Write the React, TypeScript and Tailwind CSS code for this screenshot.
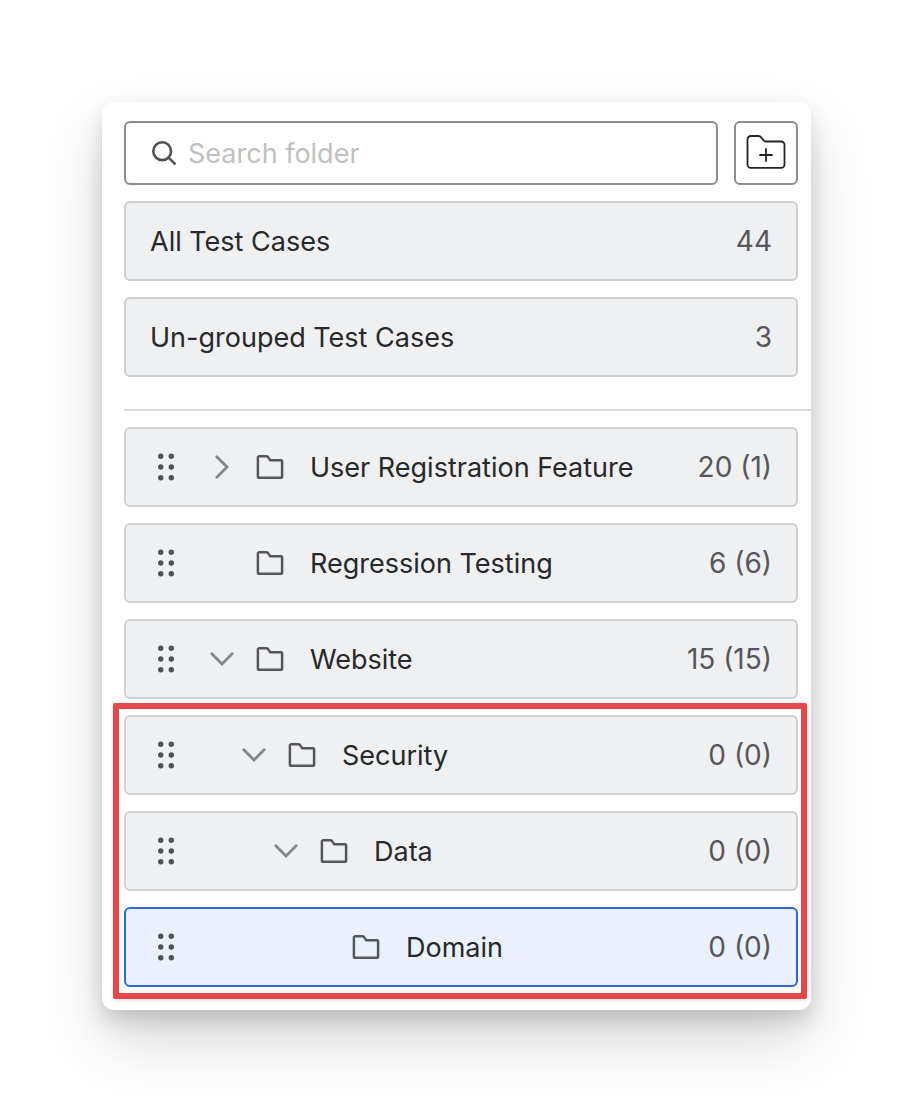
import clsx from "clsx";

type Folder = {
  name: string;
  count: string;
  level: 0 | 1 | 2 | 3;
  state?: "open" | "closed";
  selected?: boolean;
};

const summary = [
  { name: "All Test Cases", count: "44" },
  { name: "Un-grouped Test Cases", count: "3" },
];

const folders: Folder[] = [
  { name: "User Registration Feature", count: "20 (1)", level: 0, state: "closed" },
  { name: "Regression Testing", count: "6 (6)", level: 0 },
  { name: "Website", count: "15 (15)", level: 0, state: "open" },
];

const nestedFolders: Folder[] = [
  { name: "Security", count: "0 (0)", level: 1, state: "open" },
  { name: "Data", count: "0 (0)", level: 2, state: "open" },
  { name: "Domain", count: "0 (0)", level: 3, selected: true },
];

const indent = {
  0: "ml-6",
  1: "ml-14",
  2: "ml-22",
  3: "ml-30",
};

const SearchIcon = () => (
  <svg viewBox="0 0 24 24" className="size-6 shrink-0 text-[#505157]" fill="none" stroke="currentColor" strokeWidth="2.6" strokeLinecap="round">
    <circle cx="10.2" cy="10.2" r="8.9" />
    <path d="M16.8 16.8 22.7 22.7" />
  </svg>
);

const FolderPlusIcon = () => (
  <svg viewBox="0 0 40 40" className="size-10 text-[#232427]" fill="none" stroke="currentColor" strokeWidth="1.8" strokeLinecap="round" strokeLinejoin="round">
    <path d="M1.5 6.4a3.4 3.4 0 0 1 3.4-3.4h7.4c1.3 0 2.3.5 3 1.5l2 2.6c.6.9 1.4 1.4 2.6 1.4h15.2a3.4 3.4 0 0 1 3.4 3.4v19.6a3.4 3.4 0 0 1-3.4 3.4H4.9a3.4 3.4 0 0 1-3.4-3.4Z" />
    <path d="M20 16v12M14 22h12" />
  </svg>
);

const FolderIcon = () => (
  <svg viewBox="0 0 32 32" className="size-8 shrink-0 text-[#55565c]" fill="none" stroke="currentColor" strokeWidth="2.5" strokeLinejoin="round">
    <path d="M3.9 6.5A1.3 1.3 0 0 1 5.2 5.2h7.4c.4 0 .8.2 1.1.5l2.6 3.5h10.5a1.3 1.3 0 0 1 1.3 1.3v15a1.3 1.3 0 0 1-1.3 1.3H5.2a1.3 1.3 0 0 1-1.3-1.3Z" />
  </svg>
);

const GripIcon = () => (
  <svg viewBox="0 0 32 32" className="size-8 text-[#505157]" fill="currentColor">
    {[5.3, 16, 26.7].map((y) => (
      <g key={y}>
        <circle cx="10.7" cy={y} r="2.7" />
        <circle cx="21.3" cy={y} r="2.7" />
      </g>
    ))}
  </svg>
);

const ChevronIcon = ({ open }: { open: boolean }) => (
  <svg viewBox="0 0 32 32" className="size-8 text-[#84858e]" fill="none" stroke="currentColor" strokeWidth="2.8" strokeLinecap="round">
    <path d={open ? "M5.8 10.8 16 21 26.2 10.8" : "M10.8 5.8 21 16 10.8 26.2"} />
  </svg>
);

const FolderRow = ({ folder }: { folder: Folder }) => {
  const { name, count, level, state, selected } = folder;

  return (
    <li
      className={clsx(
        "flex h-20 items-center rounded-md border-2 px-6",
        selected ? "border-[#2f69d6] bg-[#eaf1fd]" : "border-[#cdcfd1] bg-[#eff0f2]"
      )}
    >
      <button type="button" aria-label={`Move ${name}`} className="cursor-grab">
        <GripIcon />
      </button>
      <div className={clsx("size-8 shrink-0", indent[level])}>
        {state && (
          <button type="button" aria-label={`Toggle ${name}`} aria-expanded={state === "open"} className="block">
            <ChevronIcon open={state === "open"} />
          </button>
        )}
      </div>
      <a href="#" className="ml-4 flex min-w-0 flex-1 items-center gap-6">
        <FolderIcon />
        <span className="flex-1 truncate">{name}</span>
        <span className="text-[28px] leading-[38px] text-[#55565b]">{count}</span>
      </a>
    </li>
  );
};

const App = () => {
  return (
    <main className="min-h-screen bg-white p-[102px] font-[Inter,sans-serif] text-[27px] leading-[37px] text-[#27282b]">
      <section className="rounded-xl bg-white pt-[19px] pr-[13px] pb-[23px] pl-[22px] shadow-[0_10px_20px_rgba(0,0,0,0.14),0_30px_60px_rgba(0,0,0,0.16)]">
        <div className="flex gap-4">
          <label className="flex h-16 min-w-0 flex-1 items-center gap-3 rounded-md border-2 border-[#8b8c94] px-[26px]">
            <SearchIcon />
            <input
              type="text"
              aria-label="Search folder"
              placeholder="Search folder"
              className="min-w-0 flex-1 outline-none placeholder:text-[#c0c0c0]"
            />
          </label>
          <button
            type="button"
            aria-label="Add folder"
            className="flex size-16 items-center justify-center rounded-md border-2 border-[#8b8c94]"
          >
            <FolderPlusIcon />
          </button>
        </div>

        <div className="mt-4 flex flex-col gap-4">
          {summary.map(({ name, count }) => (
            <a
              key={name}
              href="#"
              className="flex h-20 items-center justify-between rounded-md border-2 border-[#cdcfd1] bg-[#eff0f2] px-6"
            >
              <span>{name}</span>
              <span className="text-[28px] leading-[38px] text-[#55565b]">{count}</span>
            </a>
          ))}
        </div>

        <hr className="mt-8 -mr-[13px] mb-4 border-t-2 border-[#dcdcdd]" />

        <ul className="flex flex-col gap-4">
          {folders.map((folder) => (
            <FolderRow key={folder.name} folder={folder} />
          ))}
        </ul>

        <div className="relative mt-4">
          <ul className="flex flex-col gap-4">
            {nestedFolders.map((folder) => (
              <FolderRow key={folder.name} folder={folder} />
            ))}
          </ul>
          <div className="pointer-events-none absolute -top-3 -right-[9px] -bottom-3 -left-[11px] rounded-xs border-6 border-[#e5484b] shadow-[0_1px_4px_rgba(0,0,0,0.15)]" />
        </div>
      </section>
    </main>
  );
};

export default App;
